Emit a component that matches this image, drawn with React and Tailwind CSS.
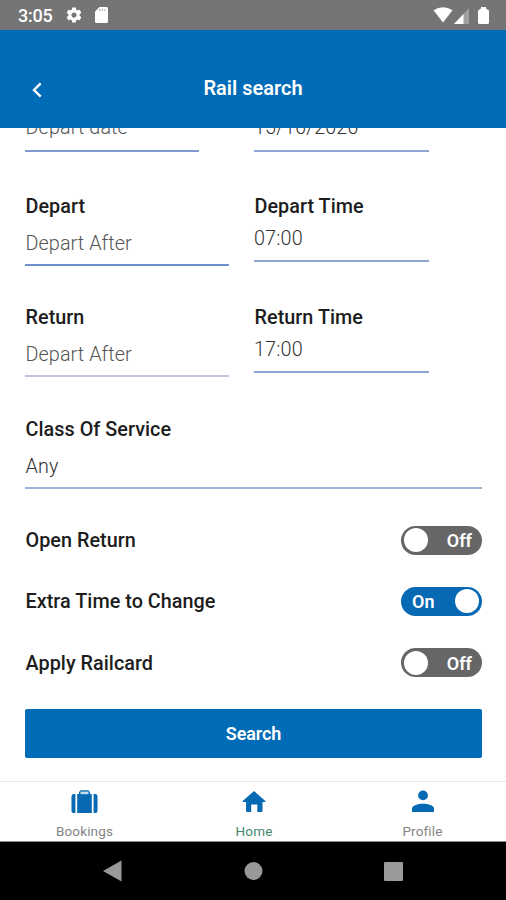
import { useState } from "react";

const tabs = [
  { name: "Bookings", icon: SuitcaseIcon, color: "text-[#858585]" },
  { name: "Home", icon: HomeIcon, color: "text-[#43896c]" },
  { name: "Profile", icon: PersonIcon, color: "text-[#858585]" },
];

function GearIcon() {
  return (
    <svg viewBox="0 0 24 24" className="w-[18px] h-[18px] fill-white">
      <path d="M19.43 12.98c.04-.32.07-.64.07-.98s-.03-.66-.07-.98l2.11-1.65c.19-.15.24-.42.12-.64l-2-3.46c-.12-.22-.39-.3-.61-.22l-2.49 1c-.52-.4-1.08-.73-1.69-.98l-.38-2.65A.488.488 0 0 0 14 2h-4c-.25 0-.46.18-.49.42l-.38 2.65c-.61.25-1.17.59-1.69.98l-2.49-1c-.23-.09-.49 0-.61.22l-2 3.46c-.13.22-.07.49.12.64l2.11 1.65c-.04.32-.07.65-.07.98s.03.66.07.98l-2.11 1.65c-.19.15-.24.42-.12.64l2 3.46c.12.22.39.3.61.22l2.49-1c.52.4 1.08.73 1.69.98l.38 2.65c.03.24.24.42.49.42h4c.25 0 .46-.18.49-.42l.38-2.65c.61-.25 1.17-.59 1.69-.98l2.49 1c.23.09.49 0 .61-.22l2-3.46c.12-.22.07-.49-.12-.64l-2.11-1.65zM12 15.5c-1.93 0-3.5-1.57-3.5-3.5s1.57-3.5 3.5-3.5 3.5 1.57 3.5 3.5-1.57 3.5-3.5 3.5z" />
    </svg>
  );
}

function SdCardIcon() {
  return (
    <svg viewBox="0 0 13 16" className="w-[13px] h-4">
      <path d="M4.5 0H11.5A1.5 1.5 0 0 1 13 1.5V14.5A1.5 1.5 0 0 1 11.5 16H1.5A1.5 1.5 0 0 1 0 14.5V4.5Z" fill="#fff" />
      <path d="M4.8 2V4M7.3 2V4M9.8 2V4" stroke="#b5b5b5" strokeWidth="1.2" />
    </svg>
  );
}

function SuitcaseIcon() {
  return (
    <svg viewBox="0 0 27 24" className="w-[27px] h-6 fill-[#0569b3]">
      <path d="M2.5 4H4.4V23H2.5A2 2 0 0 1 .5 21V6.5A2.5 2.5 0 0 1 2.5 4Z" />
      <path d="M24.5 4H22.6V23H24.5A2 2 0 0 0 26.5 21V6.5A2.5 2.5 0 0 0 24.5 4Z" />
      <path d="M6.2 4H8V2L9.8 .3H17.2L19 2V4H20.8V23H6.2Z" />
      <path d="M9.5 1.6H17.5V4.2H9.5Z" fill="#c8dced" />
    </svg>
  );
}

function HomeIcon() {
  return (
    <svg viewBox="0 0 24 24" className="w-6 h-6 fill-[#0569b3]">
      <path d="M12 1L23.3 11Q23.7 12 23 12H20.5V20.7Q20.5 22 19.3 22H15.3V14.5H9.2V22H5.2Q4 22 4 20.7V12H1Q.3 12 .7 11Z" />
    </svg>
  );
}

function PersonIcon() {
  return (
    <svg viewBox="0 0 24 24" className="w-6 h-6 fill-[#0569b3]">
      <circle cx="12" cy="5.4" r="4.9" />
      <path d="M1 22V18.7C1 15.7 7 13.8 12 13.8S23 15.7 23 18.7V22Z" />
    </svg>
  );
}

function StatusBar() {
  return (
    <div className="h-[30px] bg-[#757575] flex items-center justify-between pl-[18px] pr-4 text-white">
      <div className="flex items-center">
        <span className="w-[47px] text-[18px] font-medium leading-[30px] pt-px tracking-[-0.2px]">3:05</span>
        <GearIcon />
        <span className="ml-3">
          <SdCardIcon />
        </span>
      </div>
      <div className="flex items-center">
        <svg viewBox="0 0 20 16" className="w-5 h-4 fill-white">
          <path d="M.5 3.2Q10-2.5 19.5 3.2L10 15.5Z" />
        </svg>
        <svg viewBox="0 0 16 16" className="w-4 h-4 ml-px mt-px">
          <path d="M15 0V16H0Z" fill="#a0a0a0" />
          <path d="M9.5 6V16H0Z" fill="#fff" />
        </svg>
        <svg viewBox="0 0 11 17" className="w-[11px] h-[17px] ml-[8px] mr-px fill-white">
          <path d="M3 0H8V1.5L11 3.5V15.5Q11 17 9.5 17H1.5Q0 17 0 15.5V3.5L3 1.5Z" />
        </svg>
      </div>
    </div>
  );
}

function Label({ children }) {
  return (
    <div className="h-6 pl-[0.5px] text-[19.8px] leading-[25px] tracking-[0.04px] font-medium text-[#1d1d1d]">
      {children}
    </div>
  );
}

function SelectField({ label, value, valueColor, line }) {
  return (
    <div>
      <Label>{label}</Label>
      <div
        className={`mt-[13px] h-[35px] pl-[0.5px] border-b-2 text-[19.8px] leading-[25px] tracking-[0.08px] font-light ${valueColor} ${line}`}
      >
        {value}
      </div>
    </div>
  );
}

function TimeField({ label, value }) {
  return (
    <div className="w-[175px]">
      <Label>{label}</Label>
      <div className="mt-2 h-9 border-b-2 border-[#8ea6d3] text-[19.8px] leading-[25px] tracking-[0.15px] font-light text-[#333]">
        {value}
      </div>
    </div>
  );
}

function Toggle({ label, initial = false }) {
  const [on, setOn] = useState(initial);

  return (
    <div className="h-[30px] mb-[31.3px] flex items-center justify-between">
      <Label>{label}</Label>
      <button
        onClick={() => setOn(!on)}
        className={`w-[81px] h-[29px] rounded-full flex items-center justify-between text-[18px] font-semibold text-white ${
          on ? "bg-[#0569b3] pl-[11px] pr-[3px]" : "bg-[#666] flex-row-reverse pl-[3px] pr-[10px]"
        }`}
      >
        <span className="pt-px">{on ? "On" : "Off"}</span>
        <span className="w-6 h-6 rounded-full bg-white" />
      </button>
    </div>
  );
}

function App() {
  const [activeTab, setActiveTab] = useState("Home");

  return (
    <div className="w-[506px] h-[900px] overflow-hidden flex flex-col bg-white font-['Roboto',sans-serif]">
      <StatusBar />

      <header className="h-[98px] shrink-0 bg-[#006bb6] grid grid-cols-[60px_1fr_60px] items-center pt-[18px] text-white">
        <button className="pl-8 pt-[3px]">
          <svg viewBox="0 0 10 16" className="w-[10px] h-4 fill-none stroke-white stroke-[2.4]">
            <path d="M8.7 1.3L2 8L8.7 14.7" />
          </svg>
        </button>
        <h1 className="text-center text-[20px] font-semibold">Rail search</h1>
      </header>

      {/* scrolled form, the date row is partly under the header */}
      <main className="h-[653px] shrink-0 overflow-hidden px-[25px]">
        <div className="-mt-3 flex text-[19.8px] leading-6 tracking-[0.1px] font-light">
          <div className="w-[174px] h-9 pl-[0.5px] border-b-2 border-[#7e9dce] text-[#555]">Depart date</div>
          <div className="ml-[55px] w-[175px] h-9 border-b-2 border-[#8ea6d3] text-[#333]">15/10/2020</div>
        </div>

        <div className="mt-[42px] h-[111px] grid grid-cols-[204px_1fr] gap-[25px]">
          <SelectField label="Depart" value="Depart After" valueColor="text-[#555]" line="border-[#6d90c8]" />
          <TimeField label="Depart Time" value="07:00" />
        </div>
        <div className="h-[112px] grid grid-cols-[204px_1fr] gap-[25px]">
          <SelectField label="Return" value="Depart After" valueColor="text-[#555]" line="border-[#bfc7e0]" />
          <TimeField label="Return Time" value="17:00" />
        </div>
        <div className="h-[108px] w-[457px]">
          <SelectField label="Class Of Service" value="Any" valueColor="text-[#333]" line="border-[#a1b0d8]" />
        </div>

        <div className="w-[457px]">
          <Toggle label="Open Return" />
          <Toggle label="Extra Time to Change" initial />
          <Toggle label="Apply Railcard" />
          <button className="w-full h-[49px] rounded-[2px] bg-[#006bb6] text-white text-[18px] font-semibold tracking-[-0.1px]">
            Search
          </button>
        </div>
      </main>

      <nav className="h-[61px] shrink-0 grid grid-cols-[169px_170px_167px] border-t border-[#e8e8e8] border-b border-b-[#8a8a8a]">
        {tabs.map((tab) => (
          <button
            key={tab.name}
            onClick={() => setActiveTab(tab.name)}
            aria-pressed={activeTab === tab.name}
            className="flex flex-col items-center pt-2"
          >
            <tab.icon />
            <span className={`mt-[9px] text-[13.5px] leading-4 tracking-[0.15px] ${tab.color}`}>{tab.name}</span>
          </button>
        ))}
      </nav>

      <div className="h-[58px] shrink-0 bg-black">
        <svg viewBox="0 0 506 58" className="w-full h-full fill-[#999]">
          <path d="M103 29L121.5 18.5V39.5Z" />
          <circle cx="253.5" cy="29" r="9" />
          <rect x="384" y="20" width="19" height="19" rx="1" />
        </svg>
      </div>
    </div>
  );
}

export default App;
